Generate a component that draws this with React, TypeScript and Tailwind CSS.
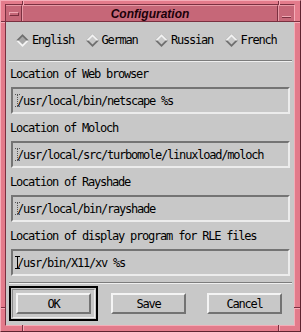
import React from "react";

const MONO = "font-['DejaVu_Sans_Mono',monospace] text-[12px] tracking-[-1.22px] text-black";

const LANGS = ["English", "German", "Russian", "French"];

const FIELDS = [
  { label: "Location of Web browser", value: "/usr/local/bin/netscape %s" },
  { label: "Location of Moloch", value: "/usr/local/src/turbomole/linuxload/moloch" },
  { label: "Location of Rayshade", value: "/usr/local/bin/rayshade" },
  { label: "Location of display program for RLE files", value: "/usr/bin/X11/xv %s", active: true },
];

function Diamond({ on }: { on: boolean }) {
  const top = on ? "#6e6e6e" : "#f4f4f4";
  const bottom = on ? "#f4f4f4" : "#6e6e6e";
  return (
    <svg width="13" height="13" viewBox="0 0 13 13" className="shrink-0">
      <polygon points="6.5,0 13,6.5 6.5,13 0,6.5" fill={bottom} />
      <polygon points="0,6.5 6.5,0 13,6.5" fill={top} />
      <polygon points="6.5,2.5 10.5,6.5 6.5,10.5 2.5,6.5" fill={on ? "#a6a6a6" : "#c8c8c8"} />
    </svg>
  );
}

function Caret({ active }: { active?: boolean }) {
  const c = active ? "#000" : "#555";
  const dash = active ? undefined : "1 1";
  return (
    <svg width="5" height="13" viewBox="0 0 5 13" className="absolute left-[2px] top-[5px]">
      <line x1="0" y1="0.5" x2="5" y2="0.5" stroke={c} strokeDasharray={dash} />
      <line x1="2.5" y1="1" x2="2.5" y2="12" stroke={c} strokeDasharray={dash} />
      <line x1="0" y1="12.5" x2="5" y2="12.5" stroke={c} strokeDasharray={dash} />
    </svg>
  );
}

function Button({ children }: { children: React.ReactNode }) {
  return (
    <div className={`w-[75px] h-[21px] flex items-center justify-center border-2 border-t-[#f4f4f4] border-l-[#f4f4f4] border-b-[#737373] border-r-[#737373] ${MONO}`}>
      {children}
    </div>
  );
}

function Separator() {
  return <div className="ml-[3px] mr-[2px] border-t border-t-[#7c7c7c] border-b border-b-[#efefef]" />;
}

export default function App() {
  return (
    <div className="relative w-[301px] h-[332px] bg-[#e37b8b] border border-t-[#f5adb8] border-l-[#f5adb8] border-r-[#5e2330] border-b-[#5e2330] pl-[4px] pt-[3px] pr-[5px] pb-[5px] flex flex-col">
      {/* resize handle notches */}
      <div className="absolute left-[21px] top-0 w-[2px] h-[4px] border-l border-l-[#7a3040] border-r border-r-[#f5adb8]" />
      <div className="absolute left-[277px] top-0 w-[2px] h-[4px] border-l border-l-[#7a3040] border-r border-r-[#f5adb8]" />
      <div className="absolute left-[21px] bottom-0 w-[2px] h-[6px] border-l border-l-[#7a3040] border-r border-r-[#f5adb8]" />
      <div className="absolute left-[277px] bottom-0 w-[2px] h-[6px] border-l border-l-[#7a3040] border-r border-r-[#f5adb8]" />
      <div className="absolute left-0 top-[20px] w-[4px] h-[2px] border-t border-t-[#7a3040] border-b border-b-[#f5adb8]" />
      <div className="absolute right-0 top-[20px] w-[6px] h-[2px] border-t border-t-[#7a3040] border-b border-b-[#f5adb8]" />
      <div className="absolute left-0 top-[306px] w-[4px] h-[2px] border-t border-t-[#7a3040] border-b border-b-[#f5adb8]" />
      <div className="absolute right-0 top-[306px] w-[6px] h-[2px] border-t border-t-[#7a3040] border-b border-b-[#f5adb8]" />

      <div className="flex-1 flex flex-col border border-t-[#7a3040] border-l-[#7a3040] border-b-[#f5adb8] border-r-[#f5adb8]">
        {/* title bar */}
        <div className="h-[17px] flex bg-[#c66778] border-b border-b-[#7a3040]">
          <div className="w-[16px] flex items-center justify-center border-t border-t-[#e89aa6] border-r border-r-[#7a3040]">
            <div className="w-[10px] h-[4px] border border-t-[#f0a8b3] border-l-[#f0a8b3] border-b-[#7a3040] border-r-[#7a3040]" />
          </div>
          <div className="flex-1 flex items-center justify-center border-t border-t-[#e89aa6] border-l border-l-[#e89aa6] border-r border-r-[#7a3040]">
            <span className="font-['Liberation_Sans',Arial,sans-serif] font-bold italic text-[12px] leading-none text-[#1a0008]">
              Configuration
            </span>
          </div>
          <div className="w-[16px] flex items-end justify-center pb-[3px] border-t border-t-[#e89aa6] border-l border-l-[#e89aa6]">
            <div className="w-[9px] h-[2px] border-t border-t-[#f0a8b3] border-b border-b-[#7a3040]" />
          </div>
        </div>

        {/* body */}
        <div className="flex-1 flex flex-col bg-[#c8c8c8]">
          <div className="mt-[12px] h-[13px] flex items-center pl-[10px]">
            {LANGS.map((l, i) => (
              <div key={l} className="w-[70px] flex items-center gap-[3px]">
                <Diamond on={i === 0} />
                <span className={`${MONO} leading-[13px]`}>{l}</span>
              </div>
            ))}
          </div>

          <div className="mt-[13px]">
            <Separator />
          </div>

          {FIELDS.map((f, i) => (
            <div key={f.label} className={i === 0 ? "mt-[5px]" : "mt-[7px]"}>
              <div className={`h-[14px] leading-[14px] pl-[4px] whitespace-pre ${MONO}`}>{f.label}</div>
              <div className="relative mt-[6px] ml-[5px] mr-[4px] h-[27px] flex items-center pl-[4px] border-2 border-t-[#747474] border-l-[#747474] border-b-[#ececec] border-r-[#ececec]">
                <Caret active={f.active} />
                <span className={`whitespace-pre ${MONO}`}>{f.value}</span>
              </div>
            </div>
          ))}

          <div className="mt-[6px]">
            <Separator />
          </div>

          <div className="mt-[2px] flex items-center pl-[3px]">
            <div className="border-2 border-black p-[1px]">
              <div className="border border-t-[#8a8a8a] border-l-[#8a8a8a] border-b-[#eeeeee] border-r-[#eeeeee] p-[3px]">
                <Button>OK</Button>
              </div>
            </div>
            <div className="ml-[13px]">
              <Button>Save</Button>
            </div>
            <div className="ml-[21px]">
              <Button>Cancel</Button>
            </div>
          </div>
        </div>
      </div>
    </div>
  );
}
